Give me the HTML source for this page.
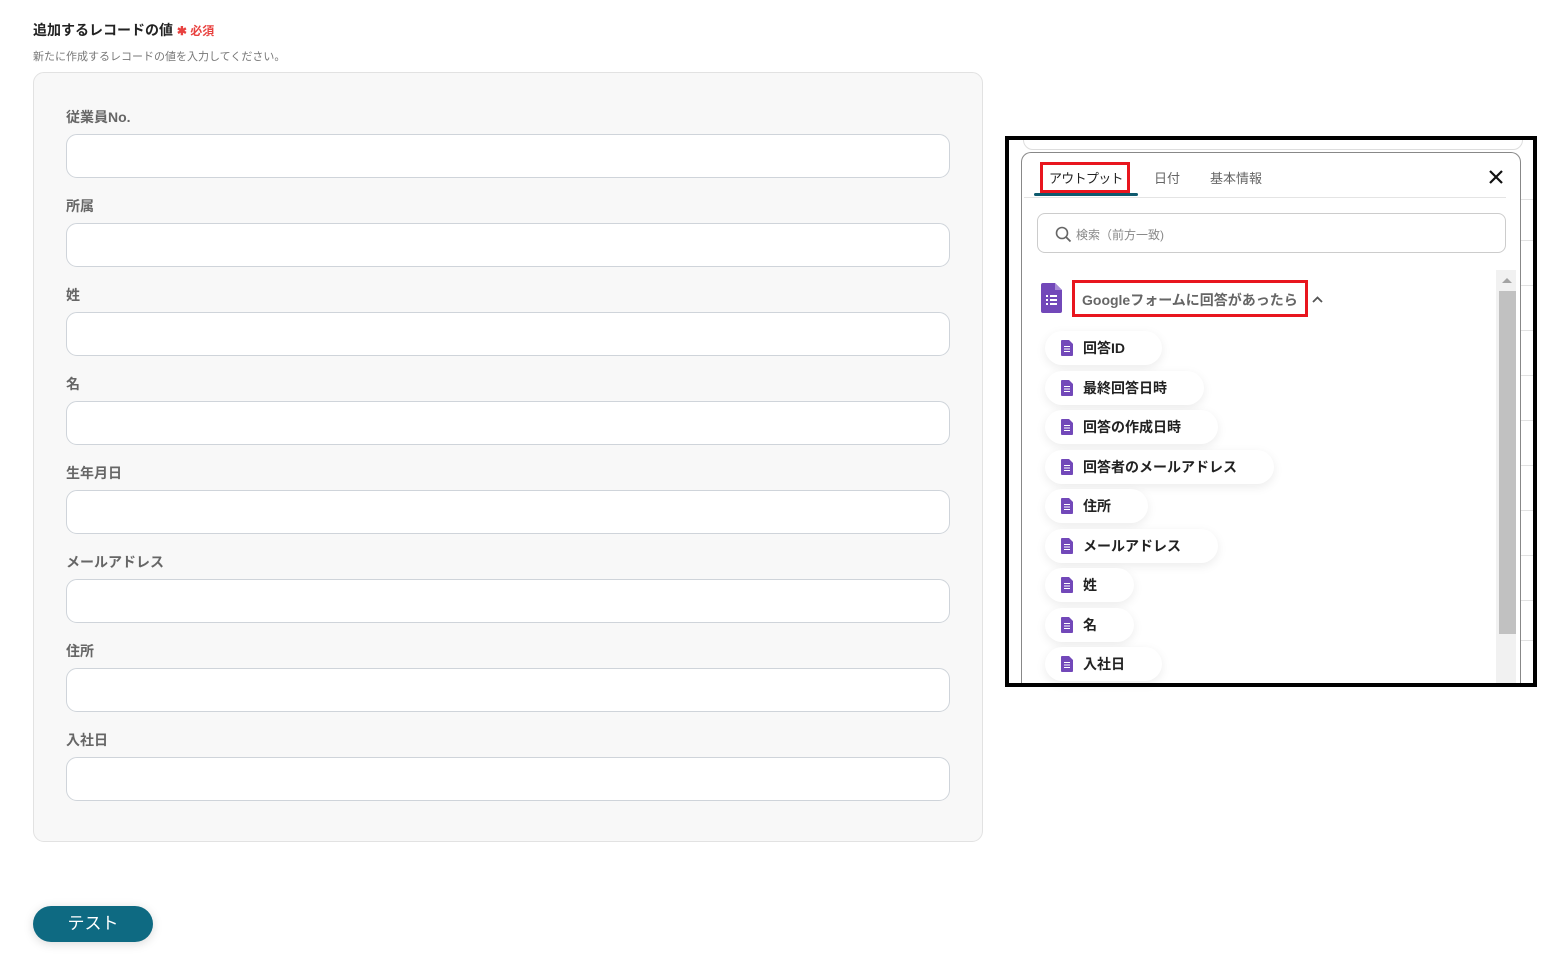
<!DOCTYPE html>
<html><head><meta charset="utf-8"><style>
*{margin:0;padding:0;box-sizing:border-box}
body{width:1558px;height:962px;background:#fff;font-family:"Liberation Sans","Noto Sans CJK JP",sans-serif;position:relative;overflow:hidden;color:#333}
.abs{position:absolute}
.lbl{position:absolute;left:66px;font-size:14px;font-weight:bold;color:#666}
.inp{position:absolute;left:66px;width:884px;height:44px;background:#fff;border:1px solid #cfd4da;border-radius:11px}
.chip{position:absolute;left:1045px;height:34px;background:#fff;border-radius:17px;box-shadow:0 3px 10px rgba(0,0,0,0.08);font-size:14px;font-weight:bold;color:#222;line-height:34px;padding-left:38px}
.chip svg{position:absolute;left:16px;top:9px}
.gl{position:absolute;left:1521px;width:12px;height:1px;background:#e2e2e2}
</style></head><body>
<div class="abs" style="left:33px;top:20px;font-size:14px;font-weight:bold;color:#222">追加するレコードの値 <span style="color:#e8413f;font-size:12px">✱ 必須</span></div>
<div class="abs" style="left:33px;top:48px;font-size:11px;color:#777">新たに作成するレコードの値を入力してください。</div>
<div class="abs" style="left:33px;top:72px;width:950px;height:770px;background:#f8f8f8;border:1px solid #e2e2e2;border-radius:11px"></div>
<div class="lbl" style="top:107px">従業員No.</div><div class="inp" style="top:134px"></div>
<div class="lbl" style="top:196px">所属</div><div class="inp" style="top:223px"></div>
<div class="lbl" style="top:285px">姓</div><div class="inp" style="top:312px"></div>
<div class="lbl" style="top:374px">名</div><div class="inp" style="top:401px"></div>
<div class="lbl" style="top:463px">生年月日</div><div class="inp" style="top:490px"></div>
<div class="lbl" style="top:552px">メールアドレス</div><div class="inp" style="top:579px"></div>
<div class="lbl" style="top:641px">住所</div><div class="inp" style="top:668px"></div>
<div class="lbl" style="top:730px">入社日</div><div class="inp" style="top:757px"></div>
<div class="abs" style="left:33px;top:906px;width:120px;height:36px;background:#0e6a82;border-radius:18px;color:#fff;font-size:17px;text-align:center;line-height:36px;box-shadow:0 2px 10px rgba(0,0,0,0.15)">テスト</div>

<div class="abs" style="left:1005px;top:136px;width:532px;height:551px;border:4px solid #000;background:#fff;overflow:hidden">
 <div class="abs" style="left:14px;top:-20px;width:500px;height:30px;border:1px solid #ddd;border-radius:10px"></div>
</div>
<div class="gl" style="top:199px"></div><div class="gl" style="top:240px"></div><div class="gl" style="top:285px"></div><div class="gl" style="top:330px"></div><div class="gl" style="top:375px"></div><div class="gl" style="top:420px"></div><div class="gl" style="top:465px"></div><div class="gl" style="top:510px"></div><div class="gl" style="top:555px"></div><div class="gl" style="top:600px"></div><div class="gl" style="top:640px"></div>
<div class="abs" style="left:1021px;top:152px;width:500px;height:531px;background:#fff;border:1px solid #888;border-bottom:none;border-radius:10px 10px 0 0;overflow:hidden">
 <div class="abs" style="left:18px;top:9px;width:90px;height:31px;border:3px solid #e8161e"></div>
 <div class="abs" style="left:27px;top:15px;font-size:13px;color:#222;letter-spacing:-0.7px">アウトプット</div>
 <div class="abs" style="left:12px;top:40px;width:104px;height:3px;background:#0e5a6e;border-radius:2px"></div>
 <div class="abs" style="left:132px;top:15px;font-size:13px;color:#666">日付</div>
 <div class="abs" style="left:188px;top:15px;font-size:13px;color:#666">基本情報</div>
 <svg class="abs" style="left:466px;top:16px" width="16" height="16" viewBox="0 0 16 16"><path d="M2 2L14 14M14 2L2 14" stroke="#111" stroke-width="2.2"/></svg>
 <div class="abs" style="left:2px;top:44px;width:482px;height:1px;background:#e4e4e4"></div>
 <div class="abs" style="left:15px;top:60px;width:469px;height:40px;border:1px solid #ccc;border-radius:8px"></div>
 <svg class="abs" style="left:33px;top:73px" width="17" height="17" viewBox="0 0 17 17"><circle cx="7" cy="7" r="5.5" fill="none" stroke="#666" stroke-width="1.6"/><path d="M11 11L15.5 15.5" stroke="#666" stroke-width="1.8"/></svg>
 <div class="abs" style="left:54px;top:73px;font-size:12px;color:#888">検索（前方一致)</div>
 <div class="abs" style="left:474px;top:117px;width:20px;height:420px;background:#f1f1f1"></div>
 <div class="abs" style="left:477px;top:138px;width:17px;height:343px;background:#c1c1c1"></div>
 <svg class="abs" style="left:480px;top:124px" width="10" height="6"><path d="M0 6L5 1L10 6Z" fill="#a3a3a3"/></svg>
 <svg class="abs" style="left:19px;top:130px" width="21" height="30" viewBox="0 0 21 30"><path d="M2 0H14L21 7V28Q21 30 19 30H2Q0 30 0 28V2Q0 0 2 0Z" fill="#7248b9"/><path d="M14 0V7H21Z" fill="#a88bd8"/><g fill="#fff"><rect x="5" y="12" width="2" height="2"/><rect x="9" y="12" width="7" height="2"/><rect x="5" y="16" width="2" height="2"/><rect x="9" y="16" width="7" height="2"/><rect x="5" y="20" width="2" height="2"/><rect x="9" y="20" width="7" height="2"/></g></svg>
 <div class="abs" style="left:50px;top:127px;width:236px;height:37px;border:3px solid #e8161e"></div>
 <div class="abs" style="left:60px;top:137px;font-size:14px;font-weight:bold;color:#666">Googleフォームに回答があったら</div>
 <svg class="abs" style="left:290px;top:143px" width="11" height="7"><path d="M1 6L5.5 1.5L10 6" fill="none" stroke="#555" stroke-width="1.8"/></svg>
</div>
<div class="chip" style="top:331px;width:117px"><svg width="12" height="16" viewBox="0 0 12 16"><path d="M0 1Q0 0 1 0H8L12 4V15Q12 16 11 16H1Q0 16 0 15Z" fill="#7248b9"/><g fill="#fff"><rect x="3" y="6" width="6" height="1"/><rect x="3" y="8.5" width="6" height="1"/><rect x="3" y="11" width="6" height="1"/></g></svg>回答ID</div>
<div class="chip" style="top:371px;width:159px"><svg width="12" height="16" viewBox="0 0 12 16"><path d="M0 1Q0 0 1 0H8L12 4V15Q12 16 11 16H1Q0 16 0 15Z" fill="#7248b9"/><g fill="#fff"><rect x="3" y="6" width="6" height="1"/><rect x="3" y="8.5" width="6" height="1"/><rect x="3" y="11" width="6" height="1"/></g></svg>最終回答日時</div>
<div class="chip" style="top:410px;width:173px"><svg width="12" height="16" viewBox="0 0 12 16"><path d="M0 1Q0 0 1 0H8L12 4V15Q12 16 11 16H1Q0 16 0 15Z" fill="#7248b9"/><g fill="#fff"><rect x="3" y="6" width="6" height="1"/><rect x="3" y="8.5" width="6" height="1"/><rect x="3" y="11" width="6" height="1"/></g></svg>回答の作成日時</div>
<div class="chip" style="top:450px;width:229px"><svg width="12" height="16" viewBox="0 0 12 16"><path d="M0 1Q0 0 1 0H8L12 4V15Q12 16 11 16H1Q0 16 0 15Z" fill="#7248b9"/><g fill="#fff"><rect x="3" y="6" width="6" height="1"/><rect x="3" y="8.5" width="6" height="1"/><rect x="3" y="11" width="6" height="1"/></g></svg>回答者のメールアドレス</div>
<div class="chip" style="top:489px;width:103px"><svg width="12" height="16" viewBox="0 0 12 16"><path d="M0 1Q0 0 1 0H8L12 4V15Q12 16 11 16H1Q0 16 0 15Z" fill="#7248b9"/><g fill="#fff"><rect x="3" y="6" width="6" height="1"/><rect x="3" y="8.5" width="6" height="1"/><rect x="3" y="11" width="6" height="1"/></g></svg>住所</div>
<div class="chip" style="top:529px;width:173px"><svg width="12" height="16" viewBox="0 0 12 16"><path d="M0 1Q0 0 1 0H8L12 4V15Q12 16 11 16H1Q0 16 0 15Z" fill="#7248b9"/><g fill="#fff"><rect x="3" y="6" width="6" height="1"/><rect x="3" y="8.5" width="6" height="1"/><rect x="3" y="11" width="6" height="1"/></g></svg>メールアドレス</div>
<div class="chip" style="top:568px;width:89px"><svg width="12" height="16" viewBox="0 0 12 16"><path d="M0 1Q0 0 1 0H8L12 4V15Q12 16 11 16H1Q0 16 0 15Z" fill="#7248b9"/><g fill="#fff"><rect x="3" y="6" width="6" height="1"/><rect x="3" y="8.5" width="6" height="1"/><rect x="3" y="11" width="6" height="1"/></g></svg>姓</div>
<div class="chip" style="top:608px;width:89px"><svg width="12" height="16" viewBox="0 0 12 16"><path d="M0 1Q0 0 1 0H8L12 4V15Q12 16 11 16H1Q0 16 0 15Z" fill="#7248b9"/><g fill="#fff"><rect x="3" y="6" width="6" height="1"/><rect x="3" y="8.5" width="6" height="1"/><rect x="3" y="11" width="6" height="1"/></g></svg>名</div>
<div class="chip" style="top:647px;width:117px"><svg width="12" height="16" viewBox="0 0 12 16"><path d="M0 1Q0 0 1 0H8L12 4V15Q12 16 11 16H1Q0 16 0 15Z" fill="#7248b9"/><g fill="#fff"><rect x="3" y="6" width="6" height="1"/><rect x="3" y="8.5" width="6" height="1"/><rect x="3" y="11" width="6" height="1"/></g></svg>入社日</div>
<div class="abs" style="left:1005px;top:683px;width:532px;height:4px;background:#000"></div>
</body></html>
